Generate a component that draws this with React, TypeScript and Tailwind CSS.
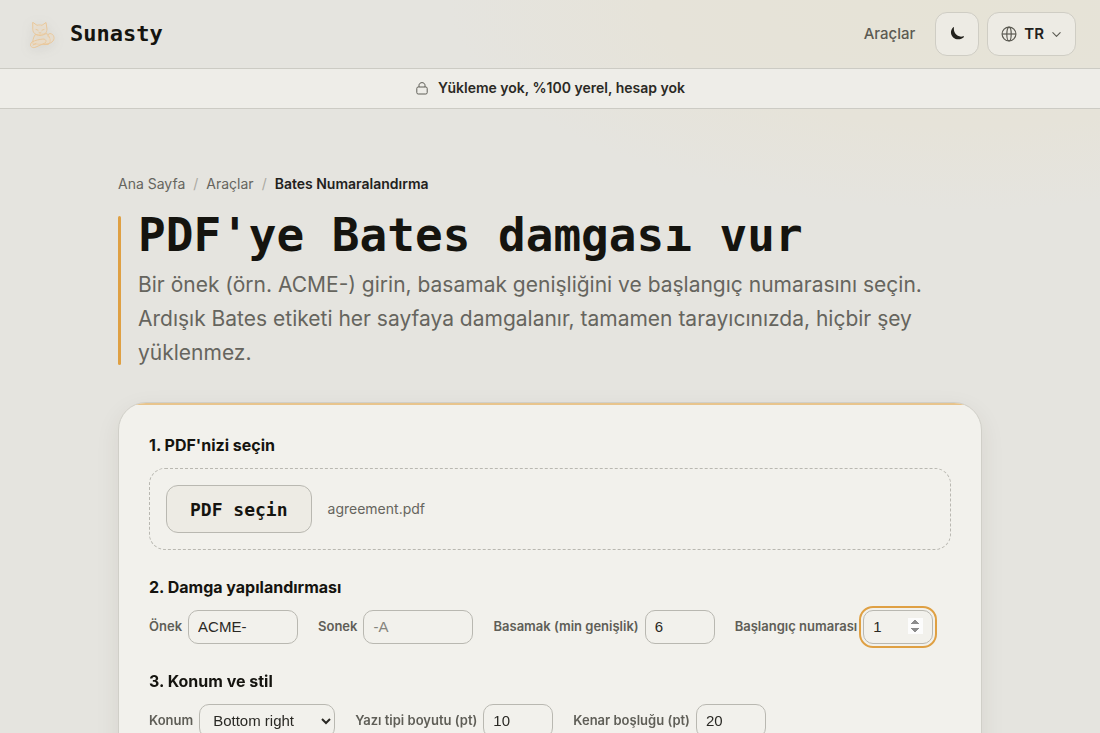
import React, { useState } from 'react';

const mono = "font-['DejaVu_Sans_Mono',monospace]";
const fieldBase =
  "h-[34px] rounded-[10px] border border-[#b9b8b1] bg-[#f2f1ec] px-[9px] pb-[2px] font-['Liberation_Sans',sans-serif] text-[15px] text-[#2a2924] placeholder:text-[#85847d] focus-visible:outline-2 focus-visible:outline-offset-2 focus-visible:outline-[#dfa043]";

const CatLogo: React.FC = () => (
  <svg
    viewBox="0 0 36 36"
    className="h-9 w-9 drop-shadow-[0_2px_6px_rgba(90,90,80,0.15)]"
    fill="#f0dcc0"
    fillOpacity="0.4"
    stroke="#e9c79a"
    strokeWidth="1"
    strokeLinecap="round"
    strokeLinejoin="round"
    aria-hidden="true"
  >
    {/* body, head, paws, tail */}
    <path d="M11 19 C9 22 8.500 25 9 28 L24 28.500 C27 27 27 22 23.500 18 Z" />
    <path d="M9 6.500 L13 9.300 C14.500 8.800 16.500 8.800 18 9.300 L22 6.500 L23 13 C23 17 20 19.500 16 19.500 C12 19.500 8.800 17 8.800 13.500 Z" />
    <path d="M8 26 C12 24 15 23.500 19 23 C22 23 23 25.500 21 27 L12 31 C9 32.500 6 31 6.500 28.500 Z" />
    <path d="M21 28 C25 28 29.500 26.500 30 22.500 C30.200 19.500 28 17 25 17.800 C23.500 18.400 23.500 20.500 25 21.500" />
    <path d="M12 13.500 L14 14.200 M18 14.200 L20 13.500 M15 16.500 L16 17.200 L17 16.500 M9 29 L12 27.500" fill="none" />
  </svg>
);

const Header: React.FC = () => (
  <header className="flex items-center justify-between border-b border-[#cccbc4] px-6 py-3">
    <a href="#" className="flex items-center gap-[10px]">
      <CatLogo />
      <span className={`${mono} text-[22px] leading-7 font-bold text-[#15140f]`}>Sunasty</span>
    </a>
    <nav className="flex items-center gap-2">
      <a href="#" className="mr-3 text-[15px] font-medium text-[#5b5a52]">Araçlar</a>
      <button type="button" aria-label="Tema" className="flex size-11 items-center justify-center rounded-xl border border-[#cfcdc4] bg-[#edebe4]">
        <svg viewBox="0 0 16 16" className="size-4" fill="#22211c" aria-hidden="true">
          <path d="M4.200 1.200 C1.200 4 1.300 8.600 4.200 11.400 C7.200 14.200 12 14 15 10.900 C15.200 10.400 14.800 10.100 14.300 10.300 C11.200 11.300 8.200 10.200 6.300 7.600 C5 5.800 4.700 3.700 4.900 1.600 C4.900 1.200 4.500 1 4.200 1.200 Z" />
        </svg>
      </button>
      <button type="button" className="flex h-11 items-center gap-[7px] rounded-xl border border-[#cfcdc4] bg-[#edebe4] px-[13px] text-[15px] font-semibold text-[#22211c]">
        <svg viewBox="0 0 16 16" className="size-4" fill="none" stroke="#5b5a52" strokeWidth="1.200" aria-hidden="true">
          <circle cx="8" cy="8" r="6.900" />
          <ellipse cx="8" cy="8" rx="2.200" ry="6.900" />
          <path d="M1.100 8 H14.900" />
        </svg>
        TR
        <svg viewBox="0 0 12 12" className="size-[11px]" fill="none" stroke="#5b5a52" strokeWidth="1.200" strokeLinecap="round" strokeLinejoin="round" aria-hidden="true">
          <path d="M2 4 L6 8 L10 4" />
        </svg>
      </button>
    </nav>
  </header>
);

const Field: React.FC<{ id: string; label: string; children: React.ReactNode }> = ({ id, label, children }) => (
  <div className="flex items-center gap-[6px]">
    <label htmlFor={id} className="text-[13px] font-semibold whitespace-nowrap text-[#5f5e57]">{label}</label>
    {children}
  </div>
);

const SectionTitle: React.FC<{ children: React.ReactNode }> = ({ children }) => (
  <h2 className="text-base leading-6 font-bold text-[#15140f]">{children}</h2>
);

export default function App() {
  const [prefix, setPrefix] = useState('ACME-');
  const [suffix, setSuffix] = useState('');
  const [digits, setDigits] = useState('6');
  const [start, setStart] = useState('1');
  const [position, setPosition] = useState('br');
  const [fontSize, setFontSize] = useState('10');
  const [margin, setMargin] = useState('20');

  return (
    <div className="min-h-screen bg-[#e5e4df] bg-[radial-gradient(ellipse_520px_210px_at_88%_0px,#e6e3d6_0%,#e6e3d9_60%,transparent_100%)] font-['Inter',sans-serif] text-[#15140f]">
      <Header />

      <div className="flex items-center justify-center gap-[9px] border-b border-[#cccbc4] bg-[#eeede8] pt-2 pb-[10px] text-sm leading-[21px] font-semibold text-[#2a2924]">
        <svg viewBox="0 0 14 14" className="size-[14px]" fill="none" stroke="#5f5e57" strokeLinejoin="round" aria-hidden="true">
          <rect x="1.800" y="6" width="10.400" height="7" rx="1.400" />
          <path d="M4 6 V4.200 C4 0.800 10 0.800 10 4.200 V6" />
        </svg>
        <span>Yükleme yok, %100 yerel, hesap yok</span>
      </div>

      <main className="mx-auto max-w-[864px] pt-16">
        <nav aria-label="Breadcrumb" className="flex items-center gap-2 text-sm leading-[22px] text-[#66655e]">
          <a href="#">Ana Sayfa</a>
          <span className="text-[#aaa9a2]">/</span>
          <a href="#">Araçlar</a>
          <span className="text-[#aaa9a2]">/</span>
          <span className="font-semibold text-[#22211c]">Bates Numaralandırma</span>
        </nav>

        <div className="mt-[21px] flex gap-[17px]">
          <div className="mb-[5px] w-[3px] shrink-0 rounded-sm bg-[#dfa043]" />
          <div>
            <h1 className={`${mono} text-[46px] leading-[38px] font-bold text-[#15140f]`}>PDF'ye Bates damgası vur</h1>
            <p className="mt-[14px] text-[21px] leading-[34px] text-[#66655e]">
              Bir önek (örn. ACME-) girin, basamak genişliğini ve başlangıç numarasını seçin. Ardışık Bates etiketi her sayfaya damgalanır, tamamen tarayıcınızda, hiçbir şey yüklenmez.
            </p>
          </div>
        </div>

        <form className="relative mt-8 overflow-hidden rounded-[28px] border border-[#d0cfc8] bg-[#f2f1ec] px-[30px] pt-[30px] pb-8 shadow-[0_8px_24px_rgba(60,55,30,0.08)]" onSubmit={(e) => e.preventDefault()}>
          {/* amber strip along the top edge */}
          <div className="absolute inset-x-0 top-0 h-[2px] bg-[#e8c48c]" />

          <SectionTitle>1. PDF'nizi seçin</SectionTitle>
          <div className="mt-[11px] flex items-center gap-4 rounded-2xl border border-dashed border-[#b9b8b1] p-4">
            <button type="button" className={`${mono} h-12 rounded-xl border border-[#b9b8b1] bg-[#edebe4] px-[23px] text-[18px] font-bold text-[#15140f]`}>
              PDF seçin
            </button>
            <span className="text-sm text-[#66655e]">agreement.pdf</span>
          </div>

          <div className="mt-[25px]">
            <SectionTitle>2. Damga yapılandırması</SectionTitle>
            <div className="mt-[11px] flex flex-wrap gap-x-5 gap-y-3">
              <Field id="prefix" label="Önek">
                <input id="prefix" type="text" value={prefix} onChange={(e) => setPrefix(e.target.value)} className={`${fieldBase} w-[110px]`} />
              </Field>
              <Field id="suffix" label="Sonek">
                <input id="suffix" type="text" placeholder="-A" value={suffix} onChange={(e) => setSuffix(e.target.value)} className={`${fieldBase} w-[110px]`} />
              </Field>
              <Field id="digits" label="Basamak (min genişlik)">
                <input id="digits" type="number" value={digits} onChange={(e) => setDigits(e.target.value)} className={`${fieldBase} w-[70px]`} />
              </Field>
              <Field id="start" label="Başlangıç numarası">
                <input id="start" type="number" autoFocus value={start} onChange={(e) => setStart(e.target.value)} className={`${fieldBase} w-[70px] caret-transparent`} />
              </Field>
            </div>
          </div>

          <div className="mt-[25px]">
            <SectionTitle>3. Konum ve stil</SectionTitle>
            <div className="mt-[11px] flex flex-wrap gap-x-5 gap-y-3">
              <Field id="position" label="Konum">
                <select id="position" value={position} onChange={(e) => setPosition(e.target.value)} className={`${fieldBase} w-[136px]`}>
                  <option value="br">Bottom right</option>
                  <option value="bl">Bottom left</option>
                  <option value="tr">Top right</option>
                  <option value="tl">Top left</option>
                </select>
              </Field>
              <Field id="font-size" label="Yazı tipi boyutu (pt)">
                <input id="font-size" type="number" value={fontSize} onChange={(e) => setFontSize(e.target.value)} className={`${fieldBase} w-[70px]`} />
              </Field>
              <Field id="margin" label="Kenar boşluğu (pt)">
                <input id="margin" type="number" value={margin} onChange={(e) => setMargin(e.target.value)} className={`${fieldBase} w-[70px]`} />
              </Field>
            </div>
          </div>
        </form>
      </main>
    </div>
  );
}
